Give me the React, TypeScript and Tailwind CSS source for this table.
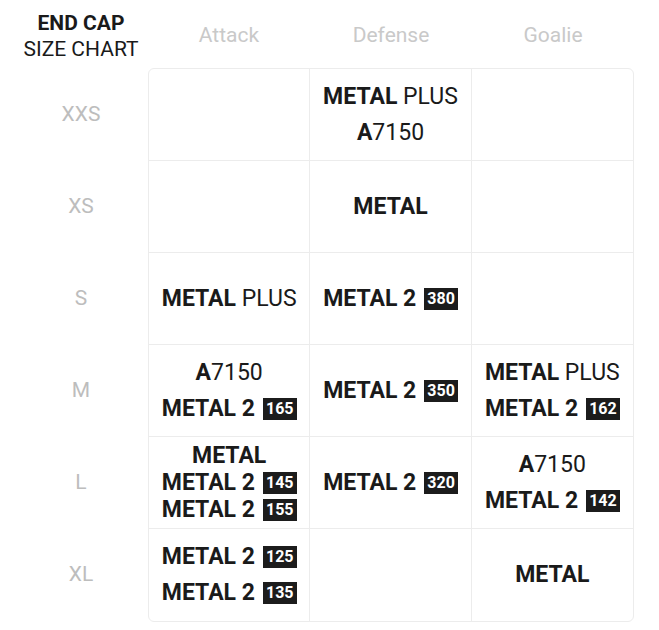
const Badge = ({ n }: { n: string }) => (
  <span className="ml-2 inline-flex h-[22px] items-center bg-[#1c1c1c] px-[3px] text-[16px] font-bold leading-none text-white">
    {n}
  </span>
)

const M2 = ({ n }: { n: string }) => (
  <div className="flex items-center">
    <span className="font-bold">METAL 2</span>
    <Badge n={n} />
  </div>
)

const Plus = () => (
  <div>
    <span className="font-bold">METAL</span> PLUS
  </div>
)

const A7150 = () => (
  <div>
    <span className="font-bold">A</span>7150
  </div>
)

const Metal = () => <div className="font-bold">METAL</div>

const sizes = ['XXS', 'XS', 'S', 'M', 'L', 'XL']

// each cell: [gap class, items]
type Cell = [string, React.ReactNode[]]

const rows: Cell[][] = [
  [['', []], ['gap-[12px]', [<Plus key="p" />, <A7150 key="a" />]], ['', []]],
  [['', []], ['', [<Metal key="m" />]], ['', []]],
  [['', [<Plus key="p" />]], ['', [<M2 key="m" n="380" />]], ['', []]],
  [
    ['gap-[12px]', [<A7150 key="a" />, <M2 key="m" n="165" />]],
    ['', [<M2 key="m" n="350" />]],
    ['gap-[12px]', [<Plus key="p" />, <M2 key="m" n="162" />]],
  ],
  [
    ['gap-[3px]', [<Metal key="m" />, <M2 key="a" n="145" />, <M2 key="b" n="155" />]],
    ['', [<M2 key="m" n="320" />]],
    ['gap-[12px]', [<A7150 key="a" />, <M2 key="m" n="142" />]],
  ],
  [['gap-[12px]', [<M2 key="a" n="125" />, <M2 key="b" n="135" />]], ['', []], ['', [<Metal key="m" />]]],
]

export default function App() {
  return (
    <div
      className="h-[630px] w-[659px] bg-white text-[#1a1a1a]"
      style={{ fontFamily: 'Roboto, "Liberation Sans", sans-serif' }}
    >
      <div className="flex">
        <div className="w-[148px] shrink-0">
          <div className="flex h-[68px] flex-col items-center justify-center pt-[3px] pl-[14px] text-[21px] leading-[26px]">
            <div className="font-bold">END CAP</div>
            <div>SIZE CHART</div>
          </div>
          {sizes.map((s) => (
            <div
              key={s}
              className="flex h-[92px] items-center justify-center pl-[14px] pt-[1px] text-[21px] text-[#bdbdbd]"
            >
              {s}
            </div>
          ))}
        </div>
        <div className="w-[486px]">
          <div className="grid h-[68px] grid-cols-3 items-center pt-[4px] text-[21px] text-[#c9c9c9]">
            <div className="text-center">Attack</div>
            <div className="text-center">Defense</div>
            <div className="text-center">Goalie</div>
          </div>
          <div className="overflow-hidden rounded-[6px] border border-[#ececec]">
            {rows.map((r, i) => (
              <div
                key={i}
                className={`grid h-[92px] grid-cols-3 ${i < rows.length - 1 ? 'border-b border-[#ececec]' : ''}`}
              >
                {r.map(([gap, items], j) => (
                  <div
                    key={j}
                    className={`flex flex-col items-center justify-center text-[23px] leading-[24px] ${gap} ${j < 2 ? 'border-r border-[#ececec]' : ''}`}
                  >
                    {items}
                  </div>
                ))}
              </div>
            ))}
          </div>
        </div>
      </div>
    </div>
  )
}
